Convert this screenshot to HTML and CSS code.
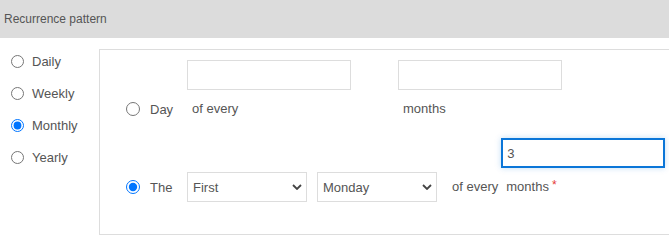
FILE: index.html
```html
<!DOCTYPE html>
<html lang="en">

<head>
    <meta charset="UTF-8">
    <meta name="viewport" content="width=device-width, initial-scale=1.0">
    <title>Recurrence pattern</title>
    <link rel="stylesheet" href="styles.css">
</head>

<body>
    <div class="section-title">Recurrence pattern</div>

    <div class="recurrence">
        <div class="pattern-list">
            <label class="pattern"><input type="radio" name="pattern"> Daily</label>
            <label class="pattern"><input type="radio" name="pattern"> Weekly</label>
            <label class="pattern"><input type="radio" name="pattern" checked> Monthly</label>
            <label class="pattern"><input type="radio" name="pattern"> Yearly</label>
        </div>

        <div class="pattern-panel">
            <div class="row first-row">
                <label class="choice"><input type="radio" name="monthly"> Day</label>
                <div class="field">
                    <input class="text-input" type="text">
                    <span class="caption">of every</span>
                </div>
                <div class="field field-months">
                    <input class="text-input" type="text">
                    <span class="caption">months</span>
                </div>
            </div>

            <div class="row">
                <label class="choice"><input type="radio" name="monthly" checked> The</label>
                <div class="select-wrap">
                    <select class="select">
                        <option>First</option>
                        <option>Second</option>
                        <option>Third</option>
                        <option>Fourth</option>
                        <option>Last</option>
                    </select>
                    <svg class="chevron" width="10" height="6" viewBox="0 0 10 6">
                        <path d="M1 1l4 4 4-4" fill="none" stroke="#444" stroke-width="1.8"/>
                    </svg>
                </div>
                <div class="select-wrap">
                    <select class="select">
                        <option>Monday</option>
                        <option>Tuesday</option>
                        <option>Wednesday</option>
                        <option>Thursday</option>
                        <option>Friday</option>
                    </select>
                    <svg class="chevron" width="10" height="6" viewBox="0 0 10 6">
                        <path d="M1 1l4 4 4-4" fill="none" stroke="#444" stroke-width="1.8"/>
                    </svg>
                </div>
                <span class="text of-every">of every</span>
                <div class="field field-interval">
                    <input class="text-input focused" type="text" value="3" autofocus>
                    <span class="caption">months<span class="required">*</span></span>
                </div>
            </div>
        </div>
    </div>
</body>

</html>
```

FILE: styles.css
```css
body {
    margin: 0;
    background-color: #fff;
    font-family: 'Liberation Sans', Arial, sans-serif;
    font-size: 13px;
    color: #555;
}

.section-title {
    display: flex;
    align-items: center;
    height: 38px;
    padding-left: 4px;
    background-color: #dcdcdc;
    font-size: 12px;
    color: #555;
}

.recurrence {
    display: flex;
    align-items: flex-start;
    padding-top: 7px;
}

.pattern-list {
    width: 99px;
    flex-shrink: 0;
}

.pattern {
    display: flex;
    align-items: center;
    height: 32px;
    cursor: pointer;
}

.pattern input {
    width: 13px;
    height: 13px;
    margin: 0 8px 0 11px;
}

.pattern-panel {
    flex: 1;
    margin-top: 4px;
    padding: 10px 0 32px 26px;
    border: 1px solid #ddd;
    border-right: none;
}

.row {
    display: flex;
    align-items: flex-end;
    margin-top: 14px;
}

.first-row {
    margin-top: 0;
}

.choice {
    display: flex;
    align-items: center;
    width: 61px;
    height: 30px;
    flex-shrink: 0;
    cursor: pointer;
}

.choice input {
    width: 14px;
    height: 14px;
    margin: 0 10px 0 0;
}

.field {
    display: flex;
    flex-direction: column;
}

.field-months {
    margin-left: 47px;
}

.field-interval {
    margin-left: 3px;
}

.text-input {
    box-sizing: border-box;
    width: 164px;
    height: 30px;
    margin: 0;
    padding: 0 5px;
    border: 1px solid #ddd;
    font-family: inherit;
    font-size: 13px;
    color: #555;
    outline: none;
}

.text-input.focused {
    border: 2px solid #0b76d8;
    padding-left: 4px;
    box-shadow: 0 0 6px rgba(11, 118, 216, 0.25);
}

.caption {
    height: 30px;
    margin-top: 4px;
    padding-left: 5px;
    line-height: 30px;
}

.required {
    margin-left: 3px;
    color: #e53935;
    font-size: 12px;
    line-height: 1;
    vertical-align: 2px;
}

.select-wrap {
    position: relative;
    margin-right: 10px;
}

.select {
    display: block;
    box-sizing: border-box;
    width: 120px;
    height: 30px;
    margin: 0;
    padding: 0 20px 0 5px;
    border: 1px solid #ddd;
    border-radius: 0;
    background-color: #fff;
    font-family: inherit;
    font-size: 13px;
    color: #555;
    appearance: none;
    -webkit-appearance: none;
    outline: none;
}

.chevron {
    position: absolute;
    right: 5px;
    top: 12px;
    pointer-events: none;
}

.text {
    line-height: 30px;
}

.of-every {
    margin-left: 5px;
}
```
